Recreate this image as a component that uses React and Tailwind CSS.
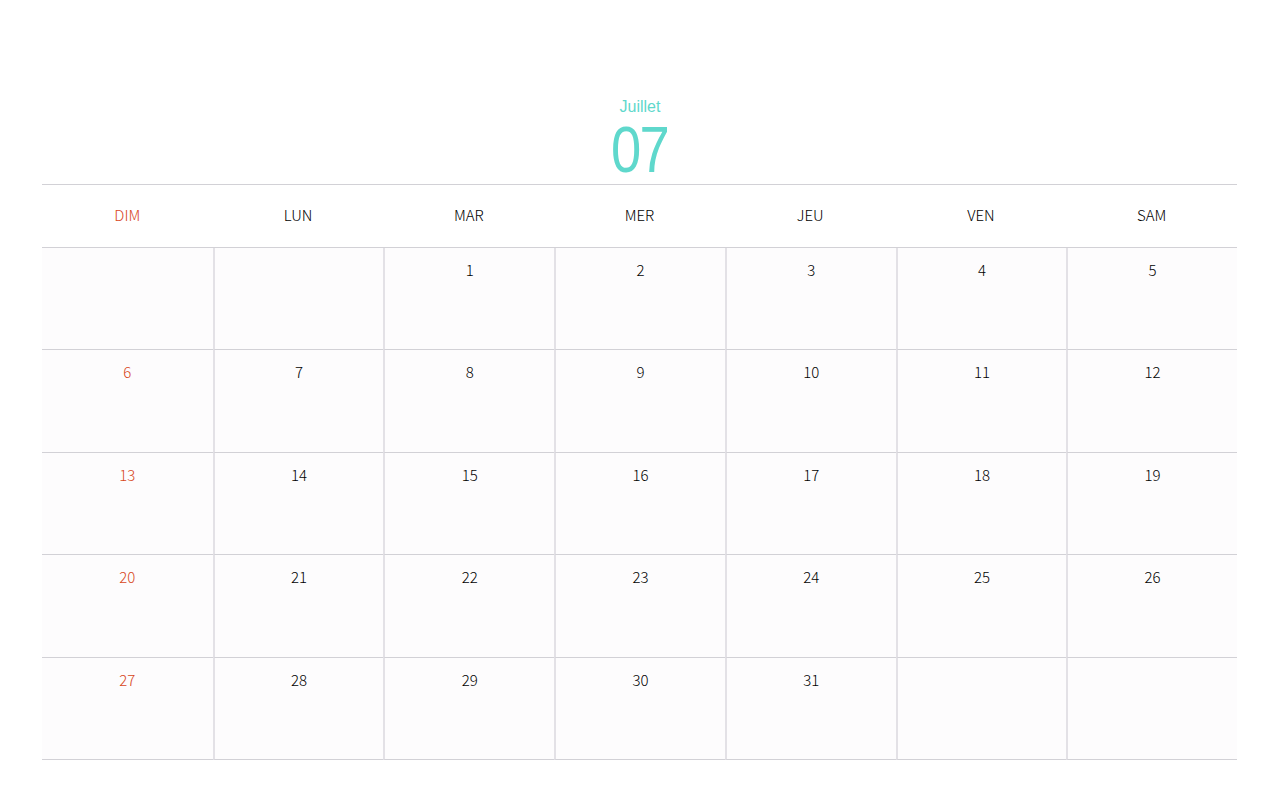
import React from "react";

const days = ["DIM", "LUN", "MAR", "MER", "JEU", "VEN", "SAM"];
const cells = [
  null, null, 1, 2, 3, 4, 5,
  6, 7, 8, 9, 10, 11, 12,
  13, 14, 15, 16, 17, 18, 19,
  20, 21, 22, 23, 24, 25, 26,
  27, 28, 29, 30, 31, null, null,
];

export default function App() {
  return (
    <div className="w-[1280px] h-[795px] bg-white" style={{ fontFamily: '"Noto Sans CJK KR", "Noto Sans", sans-serif' }}>
      <div className="pt-[98px] flex flex-col items-center text-[#5fd8cc]" style={{ fontFamily: '"Liberation Sans", Arial, sans-serif' }}>
        <div className="text-[16px] leading-[18px]">Juillet</div>
        <div className="text-[64px] leading-[68px] tracking-[-2px] scale-x-[0.85]">07</div>
      </div>
      <div className="ml-[42px] w-[1195px] border-t border-[#d2d1d6]">
        <div className="grid grid-cols-7 h-[63px] border-b border-[#d2d1d6] items-center pb-[2px]">
          {days.map((d, i) => (
            <div key={d} className={`text-center text-[15px] font-light ${i === 0 ? "text-[#d8461a]" : "text-black"}`}>
              {d}
            </div>
          ))}
        </div>
        <div className="grid grid-cols-7 bg-[#fdfcfd]">
          {cells.map((n, i) => (
            <div
              key={i}
              className={`h-[102.4px] border-b border-[#d2d1d6] pt-[11px] text-center text-[15px] font-light ${i % 7 !== 0 ? "border-l-2 border-l-[#e3e1e6]" : ""} ${i % 7 === 0 ? "text-[#d8461a]" : "text-black"}`}
            >
              {n}
            </div>
          ))}
        </div>
      </div>
    </div>
  );
}
